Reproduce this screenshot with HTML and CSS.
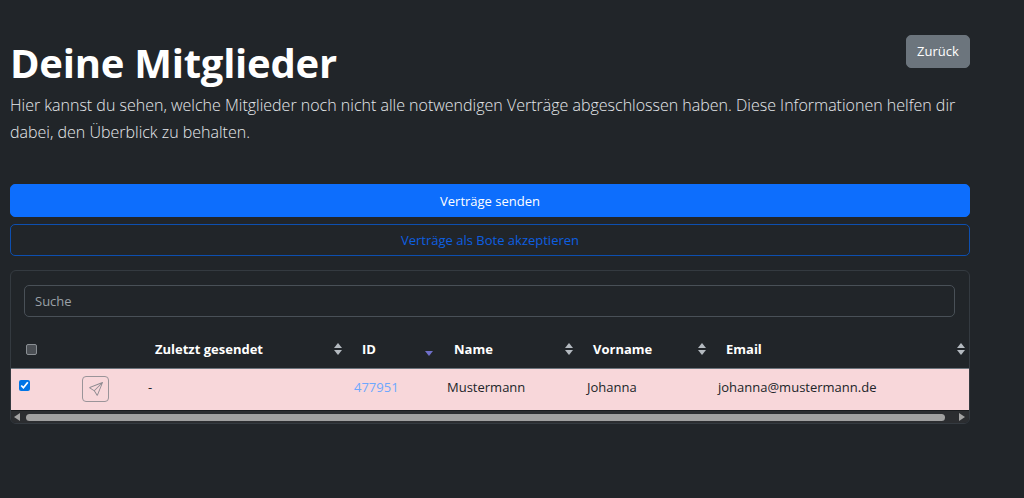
FILE: index.html
```html
<!DOCTYPE html>
<html lang="de">
<head>
    <meta charset="UTF-8">
    <meta name="viewport" content="width=device-width, initial-scale=1.0">
    <title>Deine Mitglieder</title>
    <link rel="stylesheet" href="styles.css">
</head>
<body>
    <main class="page">
        <div class="page-head">
            <div class="intro">
                <h1>Deine Mitglieder</h1>
                <p class="lead">Hier kannst du sehen, welche Mitglieder noch nicht alle notwendigen Verträge abgeschlossen haben. Diese Informationen helfen dir dabei, den Überblick zu behalten.</p>
            </div>
            <a class="btn btn-back" href="#">Zurück</a>
        </div>

        <div class="actions">
            <button class="btn btn-primary">Verträge senden</button>
            <button class="btn btn-outline">Verträge als Bote akzeptieren</button>
        </div>

        <section class="card">
            <div class="search">
                <input class="search-input" type="text" placeholder="Suche">
            </div>
            <table class="members">
                <colgroup>
                    <col class="col-check">
                    <col class="col-send">
                    <col class="col-date">
                    <col class="col-id">
                    <col class="col-name">
                    <col class="col-first">
                    <col class="col-email">
                </colgroup>
                <thead>
                    <tr>
                        <th class="th-check"><input class="check" type="checkbox"></th>
                        <th></th>
                        <th><div class="th-inner">Zuletzt gesendet<span class="sort"><i class="up"></i><i class="down"></i></span></div></th>
                        <th><div class="th-inner">ID<span class="sort sort-active"><i class="down"></i></span></div></th>
                        <th><div class="th-inner">Name<span class="sort"><i class="up"></i><i class="down"></i></span></div></th>
                        <th><div class="th-inner">Vorname<span class="sort"><i class="up"></i><i class="down"></i></span></div></th>
                        <th><div class="th-inner">Email<span class="sort"><i class="up"></i><i class="down"></i></span></div></th>
                    </tr>
                </thead>
                <tbody>
                    <tr class="row-danger">
                        <td class="cell-control"><input class="check" type="checkbox" checked></td>
                        <td class="cell-control">
                            <button class="send-btn" aria-label="Senden">
                                <svg width="14" height="14" viewBox="0 0 16 16" fill="currentColor"><path d="M15.854.146a.5.5 0 0 1 .11.54l-5.819 14.547a.75.75 0 0 1-1.329.124l-3.178-4.995L.643 7.184a.75.75 0 0 1 .124-1.33L15.314.037a.5.5 0 0 1 .54.11ZM6.636 10.07l2.761 4.338L14.13 2.576zm6.787-8.201L1.591 6.602l4.339 2.76z"/></svg>
                            </button>
                        </td>
                        <td>-</td>
                        <td class="cell-id"><a class="id-link" href="#">477951</a></td>
                        <td>Mustermann</td>
                        <td class="cell-first">Johanna</td>
                        <td class="cell-email">johanna@mustermann.de</td>
                    </tr>
                </tbody>
            </table>
            <div class="scrollbar">
                <span class="arrow arrow-left"></span>
                <span class="thumb"></span>
                <span class="arrow arrow-right"></span>
            </div>
        </section>
    </main>
</body>
</html>
```

FILE: styles.css
```css
* {
    box-sizing: border-box;
}
body {
    font-family: "Open Sans", "Noto Sans", sans-serif;
    background-color: #212529;
    color: #dee2e6;
    margin: 0;
    font-size: 13px;
}
.page {
    width: 960px;
    margin-left: 10px;
    padding-top: 35px;
}
.page-head {
    display: flex;
    justify-content: space-between;
    align-items: flex-start;
}
.intro {
    width: 850px;
    flex: none;
    margin-right: -100px;
}
h1 {
    margin: 4px 0 0;
    font-size: 40px;
    line-height: 48px;
    font-weight: 700;
    color: #fff;
    letter-spacing: -0.25px;
}
.lead {
    margin: 5px 0 0;
    width: 960px;
    font-size: 16px;
    line-height: 27px;
    font-weight: 300;
    color: #e6e9ec;
}

.btn {
    display: block;
    font-family: inherit;
    font-size: 13px;
    border-radius: 5px;
    text-align: center;
    text-decoration: none;
    cursor: pointer;
}
.btn-back {
    width: 64px;
    height: 33px;
    line-height: 31px;
    background-color: #6c757d;
    border: 1px solid #6c757d;
    color: #fff;
}
.actions {
    margin-top: 38px;
    display: flex;
    flex-direction: column;
    gap: 7px;
}
.btn-primary {
    width: 100%;
    height: 33px;
    background-color: #0d6efd;
    border: 1px solid #0d6efd;
    color: #fff;
}
.btn-outline {
    width: 100%;
    height: 32px;
    background: transparent;
    border: 1px solid #0d4fb0;
    color: #0d5fe0;
}

.card {
    margin-top: 14px;
    height: 154px;
    border: 1px solid #343a40;
    border-radius: 6px;
    overflow: hidden;
}
.search {
    padding: 14px 14px 0 13px;
}
.search-input {
    display: block;
    width: 100%;
    height: 32px;
    padding: 0 10px;
    font-family: inherit;
    font-size: 13px;
    color: #dee2e6;
    background: transparent;
    border: 1px solid #495057;
    border-radius: 5px;
}
.search-input::placeholder {
    color: #9aa1a7;
    opacity: 1;
}

.members {
    width: 959px;
    margin-top: 16px;
    border-collapse: collapse;
    table-layout: fixed;
}
.col-check { width: 63px; }
.col-send { width: 66px; }
.col-date { width: 207px; }
.col-id { width: 92px; }
.col-name { width: 139px; }
.col-first { width: 133px; }
.col-email { width: 259px; }

.members th {
    height: 35px;
    padding: 0 5px 2px 15px;
    text-align: left;
    font-weight: 700;
    color: #fff;
    border-bottom: 1px solid #6c757d;
}
.th-inner {
    display: flex;
    justify-content: space-between;
    align-items: center;
}
.sort {
    display: flex;
    flex-direction: column;
    gap: 2px;
}
.sort i {
    display: block;
    width: 0;
    height: 0;
    border-left: 4px solid transparent;
    border-right: 4px solid transparent;
}
.sort .up {
    border-bottom: 5px solid #b4bac0;
}
.sort .down {
    border-top: 5px solid #b4bac0;
}
.sort-active {
    padding: 8px 1px 0 0;
}
.sort-active .down {
    border-top-color: #6f6fc9;
}

.row-danger td {
    height: 42px;
    padding: 0 8px 4px;
    background-color: #f8d7da;
    color: #212529;
}
.row-danger .cell-control {
    padding-bottom: 1px;
}
.row-danger .cell-id {
    padding-left: 7px;
}
.row-danger .cell-first {
    padding-left: 9px;
}
.row-danger .cell-email {
    padding-left: 7px;
}
.check {
    display: block;
    width: 11px;
    height: 11px;
    margin: 0;
    accent-color: #0075e6;
}
.th-check .check {
    appearance: none;
    background: #4b4f54;
    border: 1px solid #8a8f94;
    border-radius: 2px;
}
.row-danger .check {
    margin-top: -7px;
}
.send-btn {
    display: flex;
    align-items: center;
    justify-content: center;
    width: 27px;
    height: 26px;
    padding: 0;
    background: transparent;
    border: 1px solid #9a9499;
    border-radius: 4px;
    color: #8d8a90;
}
.id-link {
    color: #6ea8fe;
    text-decoration: none;
}

.scrollbar {
    display: flex;
    align-items: center;
    height: 13px;
    padding: 0 4px 0 3px;
    background-color: #2b2d30;
    border-top: 1px solid #191b1e;
}
.arrow {
    width: 0;
    height: 0;
    border-top: 4px solid transparent;
    border-bottom: 4px solid transparent;
}
.arrow-left {
    border-right: 6px solid #a3a3a3;
}
.arrow-right {
    border-left: 6px solid #a3a3a3;
}
.thumb {
    flex: 1;
    height: 7px;
    margin: 0 14px 0 6px;
    background-color: #a0a0a0;
    border-radius: 4px;
}
```
